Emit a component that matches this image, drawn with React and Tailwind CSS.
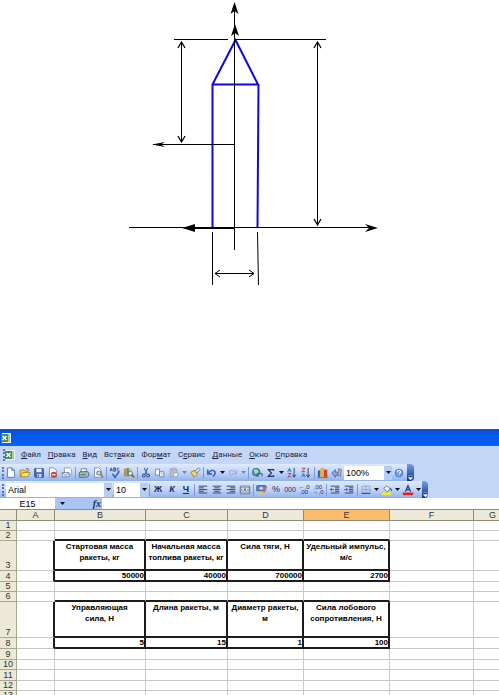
import React from "react";

const MENU = [
  ["", "Ф", "айл"],
  ["", "П", "равка"],
  ["", "В", "ид"],
  ["Вст", "а", "вка"],
  ["Фор", "м", "ат"],
  ["С", "е", "рвис"],
  ["", "Д", "анные"],
  ["", "О", "кно"],
  ["", "С", "правка"],
];

const COLUMNS = [
  { name: "A", width: "w-[38px]" },
  { name: "B", width: "w-[91px]" },
  { name: "C", width: "w-[82px]" },
  { name: "D", width: "w-[76px]" },
  { name: "E", width: "w-[86px]" },
  { name: "F", width: "w-[84px]" },
  { name: "G", width: "w-[38px]" },
];

const ROWS = [
  { n: 1, height: "h-[10px]" },
  { n: 2, height: "h-[10px]" },
  {
    n: 3,
    height: "h-[30px]",
    kind: "head",
    cells: { B: "Стартовая масса ракеты, кг", C: "Начальная масса топлива ракеты, кг", D: "Сила тяги, Н", E: "Удельный импульс, м/с" },
  },
  { n: 4, height: "h-[11px]", kind: "value", cells: { B: "50000", C: "40000", D: "700000", E: "2700" } },
  { n: 5, height: "h-[10px]" },
  { n: 6, height: "h-[10px]" },
  {
    n: 7,
    height: "h-[36px]",
    kind: "head",
    cells: { B: "Управляющая\nсила, Н", C: "Длина ракеты, м", D: "Диаметр ракеты, м", E: "Сила лобового сопротивления, Н" },
  },
  { n: 8, height: "h-[11px]", kind: "value", cells: { B: "5", C: "15", D: "1", E: "100" } },
  { n: 9, height: "h-[11px]" },
  { n: 10, height: "h-[10px]" },
  { n: 11, height: "h-[11px]" },
  { n: 12, height: "h-[10px]" },
  { n: 13, height: "h-[10px]" },
];

const ICONS = {
  new: <path d="M3 1h5l3 3v8H3z M8 1v3h3" fill="#fff" stroke="#5a6f9c" />,
  open: (
    <>
      <path d="M1.500 11.500V3.500h4l1 1h4v2" fill="#f7d257" stroke="#a87c16" />
      <path d="M1.500 11.500l3-5h8.500l-3 5z" fill="#ffe27a" stroke="#a87c16" />
      <path d="M8 2q3-1 4 2" fill="none" stroke="#3b5fa8" />
    </>
  ),
  save: (
    <>
      <path d="M2 2h10v10H3l-1-1z" fill="#4a68c0" stroke="#283c88" />
      <path d="M4 2h6v4H4z" fill="#f4f6ff" />
      <path d="M5 8h5v4H5z" fill="#c9d2ee" />
      <path d="M6 9h1v2H6z" fill="#283c88" />
    </>
  ),
  permission: (
    <>
      <path d="M3 1h5l3 3v8H3z" fill="#fff" stroke="#7487ad" />
      <circle cx="8" cy="9" r="3.500" fill="#d8402c" />
      <path d="M6 9h4" stroke="#fff" strokeWidth="1.500" />
    </>
  ),
  mail: (
    <>
      <path d="M4 1h6l2 2v6H4z" fill="#fff" stroke="#8895b4" />
      <path d="M1.500 6.500h8v5h-8z" fill="#eef2fc" stroke="#6a7ca8" />
      <path d="M2 7l3.500 3L9 7" fill="none" stroke="#6a7ca8" />
    </>
  ),
  print: (
    <>
      <path d="M4 2h6l-1 4H3z" fill="#fff" stroke="#66779c" />
      <path d="M1.500 6.500l2-1h8l1 1v4l-2 1.500h-9z" fill="#a9b4c6" stroke="#4d5c7c" />
      <path d="M3 9h6" stroke="#3f9a44" strokeWidth="1.500" />
    </>
  ),
  preview: (
    <>
      <path d="M3 1h5l3 3v8H3z" fill="#fff" stroke="#7487ad" />
      <circle cx="8" cy="7" r="2.500" fill="#bfe0f2" stroke="#4d5c7c" />
      <path d="M10 9l3 3" stroke="#b07a2c" strokeWidth="2" />
    </>
  ),
  spell: (
    <>
      <path d="M1 5l1.500-4L4 5M1.500 4h2M5.500 1v4h2V3h-2V1h2v2M12 1.500h-2.500v3H12" fill="none" stroke="#3a518c" />
      <path d="M4 8l3 4 5-7" fill="none" stroke="#3a66c8" strokeWidth="2" />
    </>
  ),
  research: (
    <>
      <path d="M1 2h3v9H1z" fill="#d6873c" />
      <path d="M4 1h3v10H4z" fill="#5c9c5c" />
      <path d="M7 2h3v9H7z" fill="#e2c258" />
      <circle cx="8.500" cy="7.500" r="2.500" fill="#e6f1fa" stroke="#596a8e" />
      <path d="M10 9l3 3" stroke="#8c6424" strokeWidth="2" />
    </>
  ),
  cut: (
    <>
      <path d="M5 1l3 7M9 1L6 8" stroke="#3b5694" strokeWidth="1.200" />
      <circle cx="4.500" cy="10" r="1.700" fill="none" stroke="#3b5694" strokeWidth="1.300" />
      <circle cx="9.500" cy="10" r="1.700" fill="none" stroke="#3b5694" strokeWidth="1.300" />
    </>
  ),
  copy: (
    <>
      <path d="M1.500 2.500h5v7h-5z" fill="#fff" stroke="#5f78ae" />
      <path d="M6.500 5.500h5v6h-5z" fill="#fff" stroke="#5f78ae" />
      <path d="M8 7.500h2M8 9.500h2" stroke="#8ba0cc" />
    </>
  ),
  paste: (
    <>
      <path d="M2.500 2.500h8v9h-8z" fill="#b9bfce" stroke="#98a2b8" />
      <path d="M4.500 1.500h4v2h-4z" fill="#d7dbe6" stroke="#98a2b8" />
      <path d="M6.500 6.500h5v5h-5z" fill="#e7eaf2" stroke="#98a2b8" />
    </>
  ),
  painter: (
    <>
      <path d="M2 6l5-2 3 4-4 4z" fill="#f3d766" stroke="#9c8226" />
      <path d="M7 5l4-4 2 2-4 4z" fill="#e0e4ec" stroke="#5c6c8e" />
    </>
  ),
  undo: <path d="M2 3v5h5M3 7q3-5 7-2q2 3-2 6" fill="none" stroke="#3c62c8" strokeWidth="1.800" />,
  redo: <path d="M11 3v5H6M10 7Q7 2 3 5q-1 3 2 5" fill="none" stroke="#a2b2d2" strokeWidth="1.500" />,
  link: (
    <>
      <circle cx="6" cy="6" r="4.500" fill="#4fa06c" stroke="#336fa0" />
      <path d="M3 4q3-3 5 0t-3 4z" fill="#a9d4ec" />
      <path d="M6 10.500h3a1.500 1.500 0 0 1 0-3h2a1.500 1.500 0 0 1 1 3" fill="none" stroke="#51607c" strokeWidth="1.200" />
    </>
  ),
  sum: <path d="M10 4.500V3H4l3.500 4L4 11h6V9.500" fill="none" stroke="#26355c" strokeWidth="1.500" />,
  sortAsc: (
    <>
      <path d="M2 5.500l2-4 2 4M3 4.500h2" fill="none" stroke="#3558b4" />
      <path d="M2 7.500h4l-4 4h4" fill="none" stroke="#a33c50" />
      <path d="M9.500 1v10M7.500 9l2 3 2-3" fill="none" stroke="#27345a" />
    </>
  ),
  sortDesc: (
    <>
      <path d="M2 1.500h4l-4 4h4" fill="none" stroke="#a33c50" />
      <path d="M2 11.500l2-4 2 4M3 10.500h2" fill="none" stroke="#3558b4" />
      <path d="M9.500 1v10M7.500 9l2 3 2-3" fill="none" stroke="#27345a" />
    </>
  ),
  chart: (
    <>
      <path d="M1 4h3v8H1z" fill="#3b63c0" />
      <path d="M4 1h4v11H4z" fill="#e8b13a" />
      <path d="M8 3h4v9H8z" fill="#d0442c" />
      <path d="M1 12.500h12" stroke="#5c6c8e" />
    </>
  ),
  drawing: (
    <>
      <path d="M1 7l4-4v3h3v4H5v2z" fill="#8ea4dc" stroke="#5468a8" />
      <path d="M9 2l3 1-1 8-3-2z" fill="#b9b6c4" stroke="#6c6f9a" />
    </>
  ),
  help: (
    <>
      <circle cx="7" cy="7" r="4.500" fill="#6d9be6" stroke="#4873c2" />
      <path d="M5 6q0-2 2-2t2 1.500q0 1-2 2M7 9v1" fill="none" stroke="#fff" strokeWidth="1.200" />
    </>
  ),
  left: <path d="M2 2.500h10M2 4.500h6M2 6.500h10M2 8.500h6M2 10.500h10" stroke="#26355c" />,
  center: <path d="M2 2.500h10M4 4.500h6M2 6.500h10M4 8.500h6M2 10.500h10" stroke="#26355c" />,
  right: <path d="M2 2.500h10M6 4.500h6M2 6.500h10M6 8.500h6M2 10.500h10" stroke="#26355c" />,
  merge: (
    <>
      <path d="M1.500 2.500h11v9h-11zM1 4.500h12M1 9.500h12" fill="#fff" stroke="#56678e" />
      <path d="M2 7h2.500M9.500 7H12M5.500 8.500l1.500-3 1.500 3" fill="none" stroke="#26355c" />
    </>
  ),
  currency: (
    <>
      <path d="M1 2h10v6H1z" fill="#5f86cf" stroke="#35508e" />
      <circle cx="6" cy="5" r="1.800" fill="#cfe0fa" />
      <path d="M7 9l5-7 1 2-4 8z" fill="#cf6f5c" />
      <path d="M3 9h6v3H3z" fill="#ecc85c" />
    </>
  ),
  outdent: (
    <>
      <path d="M2 2.500h10M7 4.500h5M7 6.500h5M7 8.500h5M2 10.500h10" stroke="#26355c" />
      <path d="M1 6.500h5M3.500 4.500l-2 2 2 2" fill="none" stroke="#3558b4" />
    </>
  ),
  indent: (
    <>
      <path d="M2 2.500h10M7 4.500h5M7 6.500h5M7 8.500h5M2 10.500h10" stroke="#26355c" />
      <path d="M1 6.500h5M3.500 4.500l2 2-2 2" fill="none" stroke="#3558b4" />
    </>
  ),
  borders: (
    <>
      <path d="M2.500 2.500h9v8h-9zM7 2v8M2 6.500h10" fill="none" stroke="#8fa2c8" />
      <path d="M2 11h10" stroke="#26355c" />
    </>
  ),
  fill: (
    <>
      <path d="M3 5l4-3 4 4-4 3z" fill="#f2f4fa" stroke="#5c6c8e" />
      <path d="M11 5l1.500 3" stroke="#3b63c0" strokeWidth="1.500" />
      <path d="M1 10h11v3H1z" fill="#f5ee1c" />
    </>
  ),
  color: (
    <>
      <path d="M4 9l3-7 3 7M5 6.500h4" fill="none" stroke="#2c3f74" strokeWidth="1.500" />
      <path d="M1 10h12v3H1z" fill="#e3201c" />
    </>
  ),
};

function Tool({ icon, label, children }) {
  return (
    <button aria-label={label} className="flex h-4 w-[14px] shrink-0 items-center justify-center text-[8px] leading-none text-[#1c2c54]">
      {icon ? (
        <svg viewBox="0 0 14 14" className="h-3 w-3">{ICONS[icon]}</svg>
      ) : (
        children
      )}
    </button>
  );
}

function Arrow() {
  return (
    <svg viewBox="0 0 5 3" className="h-[3px] w-[5px]">
      <path d="M0 0h5L2.500 3z" fill="#111" />
    </svg>
  );
}

function Drop({ label, muted }) {
  return (
    <button aria-label={label} className={`flex h-4 w-[7px] shrink-0 items-center justify-center ${muted ? "opacity-40" : ""}`}>
      <Arrow />
    </button>
  );
}

function Sep() {
  return <span className="mx-px h-3 w-px shrink-0 bg-[#7b9ad6]" />;
}

function Grip() {
  return <span className="h-3 shrink-0 border-l-2 border-dotted border-[#5576b8]" />;
}

function Combo({ label, value, className }) {
  return (
    <div className={`relative h-[14px] shrink-0 ${className}`}>
      <select
        aria-label={label}
        className="block h-full w-full appearance-none border-r-8 border-[#b4cdf6] bg-white pl-[2px] text-[9px] leading-[14px] text-black"
      >
        <option>{value}</option>
      </select>
      <span className="pointer-events-none absolute inset-y-0 right-0 flex w-2 items-center justify-center">
        <Arrow />
      </span>
    </div>
  );
}

function ToolbarEnd() {
  return (
    <button aria-label="Параметры панелей инструментов" className="ml-auto flex h-full w-[7px] items-end justify-center rounded-r-sm bg-gradient-to-b from-[#7ba0e6] to-[#0c2f88] pb-px">
      <svg viewBox="0 0 5 5" className="h-[5px] w-[5px]">
        <path d="M0 .5h5M0 2.500h5L2.500 5z" fill="#fff" stroke="#fff" strokeWidth=".3" />
      </svg>
    </button>
  );
}

function ExcelIcon() {
  return (
    <svg viewBox="0 0 10 10" className="h-[10px] w-[10px] shrink-0">
      <path d="M1 0h9v10H1z" fill="#eef6ee" />
      <path d="M7 2h2M7 4h2M7 6h2M7 8h2" stroke="#5f9e68" />
      <path d="M0 1h7v8H0z" fill="#3f9150" />
      <path d="M1.500 3l4 4M5.500 3l-4 4" stroke="#fff" strokeWidth="1.300" />
    </svg>
  );
}

function RocketDiagram() {
  return (
    <figure className="flex shrink-0 justify-center pb-[139px]">
      <svg width="499" height="290" viewBox="0 0 499 290" fill="none" stroke="#000">
        {/* rocket body */}
        <g stroke="#1208d8" strokeWidth="2">
          <path d="M212.500 228V84.500L235.500 40L258 84.500H212.500" />
          <path d="M258.500 84L257.500 228" />
        </g>

        {/* axes */}
        <path d="M234.500 8V250M129 227.500H370" />
        <path d="M195 228H234" strokeWidth="2" />
        <path d="M153 144.500H234" />

        {/* dimension lines */}
        <path d="M174 39.500H228M236 39.500H326" />
        <path d="M181.500 42V142M317.500 42V225M215 273.500H254" />
        <path d="M212.500 232V285M257.500 232L258.500 285" />
        <path d="M178 48L181.500 42L185 48M178 136L181.500 142L185 136" strokeWidth="1.300" />
        <path d="M314 48L317.500 42L321 48M314 219L317.500 225L321 219" strokeWidth="1.300" />
        <path d="M220 270L215 273.500L220 277M249 270L254 273.500L249 277" />

        {/* arrow heads */}
        <g fill="#000" stroke="none">
          <path d="M234.500 2L238.500 14L234.500 11L230.500 14Z" />
          <path d="M235 24L239 36L235 33L231 36Z" />
          <path d="M152 144.500L165 142L161 144.500L165 147Z" />
          <path d="M182 228L195 224V232Z" />
          <path d="M378 228L365 224L369 228L365 232Z" />
        </g>
      </svg>
    </figure>
  );
}

function MenuBar() {
  return (
    <nav className="flex h-[18px] shrink-0 items-center pl-[3px]">
      <Grip />
      <ExcelIcon />
      <div className="ml-[6px] flex gap-[7px]">
        {MENU.map(([before, key, after]) => (
          <button key={before + key + after} className="font-['Roboto','Noto_Sans',sans-serif] text-[8px] leading-3 text-[#1a1f3a]">
            {before}
            <span className="underline">{key}</span>
            {after}
          </button>
        ))}
      </div>
    </nav>
  );
}

function StandardToolbar() {
  return (
    <div className="flex h-[17px] w-[414px] items-center rounded-r-sm bg-gradient-to-b from-[#dfeafd] via-[#c0d5f8] to-[#8fb1ec] pl-[2px]">
      <Grip />
      <Tool icon="new" label="Создать" />
      <Tool icon="open" label="Открыть" />
      <Tool icon="save" label="Сохранить" />
      <Tool icon="permission" label="Разрешения" />
      <Tool icon="mail" label="Сообщение" />
      <Sep />
      <Tool icon="print" label="Печать" />
      <Tool icon="preview" label="Предварительный просмотр" />
      <Sep />
      <Tool icon="spell" label="Орфография" />
      <Tool icon="research" label="Справочные материалы" />
      <Sep />
      <Tool icon="cut" label="Вырезать" />
      <Tool icon="copy" label="Копировать" />
      <Tool icon="paste" label="Вставить" />
      <Drop label="Варианты вставки" muted />
      <Tool icon="painter" label="Формат по образцу" />
      <Sep />
      <Tool icon="undo" label="Отменить" />
      <Drop label="Список отмены" />
      <Tool icon="redo" label="Вернуть" />
      <Drop label="Список возврата" muted />
      <Sep />
      <Tool icon="link" label="Гиперссылка" />
      <Tool icon="sum" label="Автосумма" />
      <Drop label="Функции" />
      <Tool icon="sortAsc" label="Сортировка по возрастанию" />
      <Tool icon="sortDesc" label="Сортировка по убыванию" />
      <Sep />
      <Tool icon="chart" label="Мастер диаграмм" />
      <Tool icon="drawing" label="Рисование" />
      <Combo label="Масштаб" value="100%" className="w-12" />
      <Tool icon="help" label="Справка" />
      <ToolbarEnd />
    </div>
  );
}

function FormattingToolbar() {
  return (
    <div className="flex h-[17px] w-[428px] items-center rounded-r-sm bg-gradient-to-b from-[#dfeafd] via-[#c0d5f8] to-[#8fb1ec] pl-[2px]">
      <Grip />
      <Combo label="Шрифт" value="Arial" className="ml-[2px] w-[106px]" />
      <Combo label="Размер" value="10" className="ml-[2px] w-[34px]" />
      <Sep />
      <Tool label="Полужирный"><b className="text-[9px]">Ж</b></Tool>
      <Tool label="Курсив"><b className="text-[9px] italic">К</b></Tool>
      <Tool label="Подчеркнутый"><b className="text-[9px] underline">Ч</b></Tool>
      <Sep />
      <Tool icon="left" label="По левому краю" />
      <Tool icon="center" label="По центру" />
      <Tool icon="right" label="По правому краю" />
      <Tool icon="merge" label="Объединить и поместить в центре" />
      <Sep />
      <Tool icon="currency" label="Денежный формат" />
      <Tool label="Процентный формат"><span className="text-[9px]">%</span></Tool>
      <Tool label="Формат с разделителями"><span className="text-[7px]">000</span></Tool>
      <Tool label="Увеличить разрядность"><span className="text-[6px] leading-[5px]">←,0<br />,00</span></Tool>
      <Tool label="Уменьшить разрядность"><span className="text-[6px] leading-[5px]">,00<br />→,0</span></Tool>
      <Sep />
      <Tool icon="outdent" label="Уменьшить отступ" />
      <Tool icon="indent" label="Увеличить отступ" />
      <Sep />
      <Tool icon="borders" label="Границы" />
      <Drop label="Виды границ" />
      <Tool icon="fill" label="Цвет заливки" />
      <Drop label="Выбор цвета заливки" />
      <Tool icon="color" label="Цвет шрифта" />
      <Drop label="Выбор цвета шрифта" />
      <ToolbarEnd />
    </div>
  );
}

function FormulaBar() {
  return (
    <div className="flex h-[11px] shrink-0 items-center bg-white text-[9px] leading-[10px]">
      <input aria-label="Имя" defaultValue="E15" className="h-full w-[55px] text-center text-black" />
      <div className="flex h-full w-[47px] items-center justify-between bg-[#a9c4f5] pl-1">
        <Drop label="Список имён" />
        <button aria-label="Вставка функции" className="pr-px font-['Liberation_Serif',serif] text-[10px] font-bold italic leading-[10px] text-[#1c2c54]">
          fx
        </button>
      </div>
      <input aria-label="Строка формул" className="h-full min-w-0 flex-1" />
    </div>
  );
}

// Borders are drawn on the right and bottom sides only, so a cell also
// carries the frame of the neighbour that follows it.
function cellClass(rowIndex, colIndex) {
  const filled = (r, c) => Boolean(ROWS[r]?.cells?.[COLUMNS[c]?.name]);
  const self = filled(rowIndex, colIndex);
  const right = self || filled(rowIndex, colIndex + 1) ? "border-r-2 border-r-[#1c1c1c]" : "border-r border-r-[#c8c8c8]";
  const bottom = self || filled(rowIndex + 1, colIndex) ? "border-b-2 border-b-[#1c1c1c]" : "border-b border-b-[#c8c8c8]";
  const kind = ROWS[rowIndex].kind;
  const text = kind === "head" ? "align-top text-center leading-[11px] whitespace-pre-line" : "text-right leading-[9px]";
  return `p-0 font-bold text-[8px] text-black ${right} ${bottom} ${text}`;
}

function Sheet() {
  return (
    <div className="min-h-0 flex-1 overflow-hidden">
      <table className="w-full min-w-[512px] table-fixed border-separate border-spacing-0 bg-white">
        <colgroup>
          <col className="w-[17px]" />
          {COLUMNS.map((col) => (
            <col key={col.name} className={col.width} />
          ))}
        </colgroup>
        <thead>
          <tr className="h-3 text-[9px] leading-[10px] text-[#333]">
            <th aria-label="Выделить все" className="border-y border-r border-[#8f8b78] bg-[#ece9d8] p-0" />
            {COLUMNS.map((col) => (
              <th
                key={col.name}
                scope="col"
                className={`border-y border-r border-[#8f8b78] p-0 font-normal ${col.name === "E" ? "bg-[#fbbd6c]" : "bg-[#ece9d8]"}`}
              >
                {col.name}
              </th>
            ))}
          </tr>
        </thead>
        <tbody>
          {ROWS.map((row, r) => (
            <tr key={row.n} className={row.height}>
              <th scope="row" className="border-b border-r border-[#a9a590] bg-[#ece9d8] p-0 align-bottom text-[9px] font-normal leading-[9px] text-[#333]">
                {row.n}
              </th>
              {COLUMNS.map((col, c) => (
                <td key={col.name} className={cellClass(r, c)}>
                  {row.cells?.[col.name]}
                </td>
              ))}
            </tr>
          ))}
        </tbody>
      </table>
    </div>
  );
}

export default function App() {
  return (
    <main className="flex h-screen flex-col overflow-hidden bg-white font-['Liberation_Sans',Arial,sans-serif]">
      <RocketDiagram />
      <section className="flex min-h-0 flex-1 flex-col bg-[#c3d6f8]">
        <header className="flex h-[17px] shrink-0 items-center bg-gradient-to-b from-[#0a50d0] via-[#0458ea] to-[#0664fa] pl-[1px]">
          <ExcelIcon />
        </header>
        <MenuBar />
        <div className="shrink-0">
          <StandardToolbar />
          <FormattingToolbar />
        </div>
        <FormulaBar />
        <Sheet />
      </section>
    </main>
  );
}
